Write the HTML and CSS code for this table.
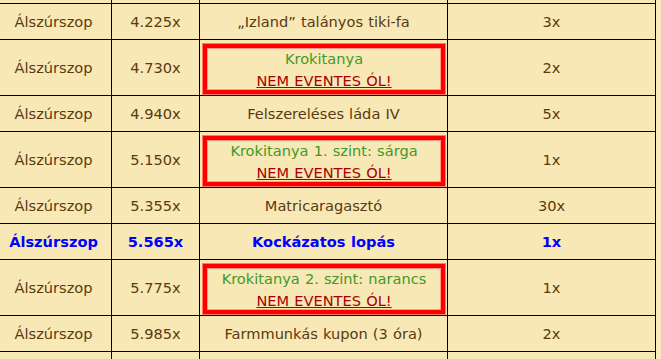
FILE: index.html
```html
<!DOCTYPE html>
<html lang="hu">
<head>
<meta charset="utf-8">
<title>Álszúrszop</title>
<link rel="stylesheet" href="styles.css">
</head>
<body>
<table class="grid">
  <colgroup>
    <col class="c1"><col class="c2"><col class="c3"><col class="c4">
  </colgroup>
  <tbody>
    <tr class="edge"><td></td><td></td><td></td><td></td></tr>
    <tr><td>Álszúrszop</td><td>4.225x</td><td>„Izland” talányos tiki-fa</td><td>3x</td></tr>
    <tr><td>Álszúrszop</td><td>4.730x</td><td class="boxcell"><div class="warn"><span class="farm">Krokitanya</span><br><a class="nem" href="#">NEM EVENTES ÓL!</a></div></td><td>2x</td></tr>
    <tr><td>Álszúrszop</td><td>4.940x</td><td>Felszereléses láda IV</td><td>5x</td></tr>
    <tr><td>Álszúrszop</td><td>5.150x</td><td class="boxcell"><div class="warn"><span class="farm">Krokitanya 1. szint: sárga</span><br><a class="nem" href="#">NEM EVENTES ÓL!</a></div></td><td>1x</td></tr>
    <tr><td>Álszúrszop</td><td>5.355x</td><td>Matricaragasztó</td><td>30x</td></tr>
    <tr class="hl"><td>Álszúrszop</td><td>5.565x</td><td>Kockázatos lopás</td><td>1x</td></tr>
    <tr><td>Álszúrszop</td><td>5.775x</td><td class="boxcell"><div class="warn"><span class="farm">Krokitanya 2. szint: narancs</span><br><a class="nem" href="#">NEM EVENTES ÓL!</a></div></td><td>1x</td></tr>
    <tr><td>Álszúrszop</td><td>5.985x</td><td>Farmmunkás kupon (3 óra)</td><td>2x</td></tr>
    <tr class="edge"><td></td><td></td><td></td><td></td></tr>
  </tbody>
</table>
</body>
</html>
```
FILE: styles.css
```css
html, body {
  margin: 0;
  padding: 0;
  background: #f9eabc;
  overflow: hidden;
}
.grid {
  border-collapse: collapse;
  table-layout: fixed;
  width: 661px;
  margin: -33px 0 0 -5px;
  font-family: "DejaVu Sans", Verdana, sans-serif;
  font-size: 14.6px;
  word-spacing: 0.5px;
  color: #5a3a10;
  background: #f8e8b5;
}
.c1 { width: 116px; }
.c2 { width: 88px; }
.c3 { width: 248px; }
.c4 { width: 208px; }
.grid td {
  border: 1px solid #000;
  text-align: center;
  vertical-align: middle;
  height: 35px;
  padding: 0;
  line-height: 22px;
}
.grid td.boxcell {
  padding: 3px 1px 0 2px;
  height: auto;
}
.warn {
  border: 4px solid #ff0000;
  outline: 1px solid #ff7a6a;
  box-shadow: inset 0 0 0 1px #ff9a8a;
  margin: 1px;
  height: 42px;
  line-height: 22px;
}
.farm { color: #42982a; }
.nem { color: #a80000; text-decoration: underline; }
.hl td { color: #0000ff; font-weight: bold; }
```
